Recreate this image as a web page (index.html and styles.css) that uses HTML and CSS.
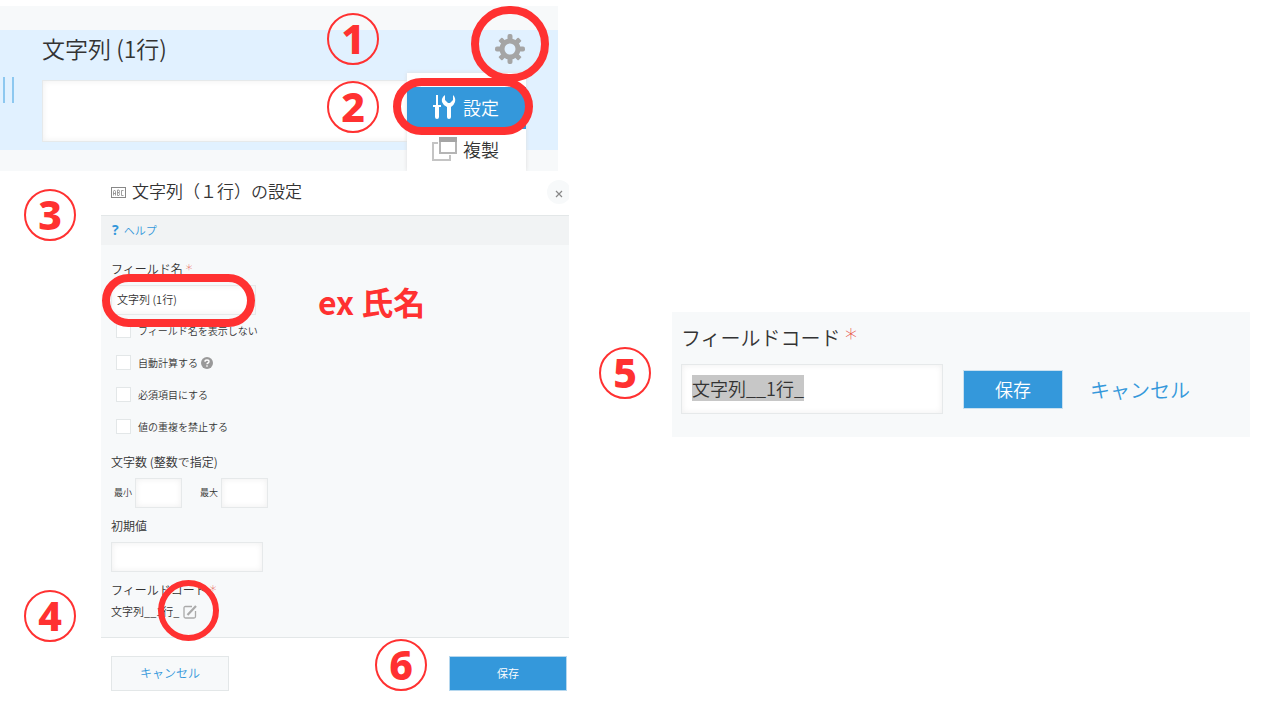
FILE: index.html
```html
<!DOCTYPE html>
<html lang="ja">
<head>
    <meta charset="UTF-8">
    <meta name="viewport" content="width=device-width, initial-scale=1.0">
    <title>文字列（１行）の設定</title>
    <link rel="stylesheet" href="styles.css">
</head>
<body>
    <main class="guide">
        <div class="guide-left">
            <section class="field-panel">
                <div class="field-row">
                    <span class="drag-handle"></span>
                    <div class="field-main">
                        <label class="field-label" for="preview">文字列 (1行)</label>
                        <input class="text-box field-input" type="text" id="preview">
                    </div>
                    <button class="gear-btn" type="button" aria-label="設定メニュー">
                        <svg width="30" height="30" viewBox="0 0 30 30">
                            <g fill="#a5a5a5">
                                <rect x="12.500" y="0" width="5" height="30" rx="2"/>
                                <rect x="12.500" y="1" width="5" height="28" rx="1" transform="rotate(45 15 15)"/>
                                <rect x="12.500" y="0" width="5" height="30" rx="2" transform="rotate(90 15 15)"/>
                                <rect x="12.500" y="1" width="5" height="28" rx="1" transform="rotate(135 15 15)"/>
                                <circle cx="15" cy="15" r="10.500"/>
                            </g>
                            <circle cx="15" cy="15" r="5.500" fill="#e1f1ff"/>
                        </svg>
                    </button>
                </div>
                <div class="menu">
                    <button class="menu-item menu-item-active" type="button">
                        <svg width="26" height="26" viewBox="0 0 26 26" fill="#fff">
                            <path d="M4 1h2v10h3v2H7v10q0 2-2 2t-2-2V13H1v-2h3z"/>
                            <path d="M13 1v5l3 3h2l3-3V1q3 3 2 7-1 3-4 5v10q0 2-2 2t-2-2V13q-4-2-5-5-1-4 3-7z"/>
                        </svg>
                        設定
                    </button>
                    <button class="menu-item" type="button">
                        <svg width="26" height="26" viewBox="0 0 26 26">
                            <path d="M6 7H1v17h17v-5" fill="none" stroke="#c4c4c4" stroke-width="2"/>
                            <rect x="8" y="2" width="16" height="15" fill="#fff" stroke="#b5b5b5" stroke-width="2"/>
                            <rect x="7" y="1" width="18" height="5" fill="#a5a5a5"/>
                        </svg>
                        複製
                    </button>
                </div>
            </section>

            <form class="settings">
                <header class="settings-header">
                    <svg width="15" height="11" viewBox="0 0 15 11" fill="none" stroke="#888">
                        <rect x=".5" y=".5" width="14" height="10"/>
                        <path d="M2.500 8.500v-4l1-1.500 1 1.500v4M2.500 6.500h2M6.500 3v5.500h1.500l.5-1-.5-1.500.5-1.500-.5-1.500H6.500M6.500 5.500H8M12.500 3.500h-2v5h2" stroke-width=".8"/>
                    </svg>
                    <h1 class="settings-title">文字列（１行）の設定</h1>
                    <button class="close-btn" type="button" aria-label="閉じる">
                        <svg width="8" height="8" viewBox="0 0 8 8" stroke="#888" stroke-width="1.200"><path d="M1 1l6 6M7 1L1 7"/></svg>
                    </button>
                </header>
                <div class="help-bar"><b class="help-mark">?</b><a class="link" href="#">ヘルプ</a></div>
                <div class="settings-body">
                    <label class="label" for="field-name">フィールド名 <span class="required">*</span></label>
                    <input class="text-box name-input" type="text" id="field-name" value="文字列 (1行)">
                    <div class="checks">
                        <label class="check"><input class="check-box" type="checkbox">フィールド名を表示しない</label>
                        <label class="check"><input class="check-box" type="checkbox">自動計算する
                            <svg class="hint" width="12" height="12" viewBox="0 0 12 12">
                                <circle cx="6" cy="6" r="6" fill="#999"/>
                                <path d="M4 4.700q0-1.700 2-1.700t2 1.500q0 1-1 1.500T6 7.300M6 8.300v1.400" fill="none" stroke="#fff" stroke-width="1.400"/>
                            </svg>
                        </label>
                        <label class="check"><input class="check-box" type="checkbox">必須項目にする</label>
                        <label class="check"><input class="check-box" type="checkbox">値の重複を禁止する</label>
                    </div>
                    <span class="label">文字数 (整数で指定)</span>
                    <div class="range">
                        <label class="range-label"><span class="range-text">最小</span><input class="text-box range-input" type="text"></label>
                        <label class="range-label"><span class="range-text">最大</span><input class="text-box range-input" type="text"></label>
                    </div>
                    <label class="label" for="default">初期値</label>
                    <input class="text-box default-input" type="text" id="default">
                    <span class="label code-label">フィールドコード <span class="required">*</span></span>
                    <div class="code">
                        <span class="code-text">文字列__1行_</span>
                        <button class="edit-btn" type="button" aria-label="編集">
                            <svg width="14" height="14" viewBox="0 0 14 14" fill="none" stroke="#aaa">
                                <path d="M9 1.500H2.500q-1.500 0-1.500 1.500v8.500Q1 13 2.500 13h8.500q1.500 0 1.500-1.500V6" stroke-width="1.300"/>
                                <path d="M4.500 10L13 1" stroke-width="2.200"/>
                            </svg>
                        </button>
                    </div>
                </div>
                <footer class="settings-footer">
                    <button class="btn cancel-btn" type="button">キャンセル</button>
                    <button class="btn save-btn" type="submit">保存</button>
                </footer>
            </form>

            <span class="ring ring-gear"></span>
            <span class="ring ring-menu"></span>
            <span class="ring ring-name"></span>
            <span class="ring ring-code"></span>
            <span class="step step-1">1</span>
            <span class="step step-2">2</span>
            <span class="step step-3">3</span>
            <span class="step step-4">4</span>
            <span class="step step-6">6</span>
            <span class="example">ex 氏名</span>
        </div>

        <div class="guide-right">
            <span class="step">5</span>
            <form class="code-panel">
                <label class="code-panel-label" for="field-code">フィールドコード <span class="required">*</span></label>
                <div class="code-panel-row">
                    <input class="text-box code-input" type="text" id="field-code" value="文字列__1行_">
                    <button class="btn code-save" type="submit">保存</button>
                    <a class="link code-cancel" href="#">キャンセル</a>
                </div>
            </form>
        </div>
    </main>

    <script>
        const fieldCode = document.getElementById('field-code');
        fieldCode.focus();
        fieldCode.select();
    </script>
</body>
</html>
```
FILE: styles.css
```css
* {
    box-sizing: border-box;
}
body {
    margin: 0;
    background: #fff;
    color: #333;
    font-family: "Noto Sans CJK JP", sans-serif;
    font-size: 12px;
    font-weight: 350;
}
button, input {
    font-family: inherit;
    font-weight: inherit;
    color: inherit;
}
button {
    padding: 0;
    border: none;
    background: none;
    cursor: pointer;
}
svg {
    flex: none;
}
.guide {
    display: grid;
    grid-template-columns: 569fr 711fr;
}
.guide-left {
    position: relative;
    padding-top: 6px;
}
.text-box {
    display: block;
    border: 1px solid #e6e9ea;
    background: #fff;
    box-shadow: inset 0 0 6px #eee;
    outline: none;
}
.link {
    color: #3498db;
    text-decoration: none;
}
.required {
    color: #e74c3c;
    font-family: "DejaVu Sans", sans-serif;
    font-size: 14px;
    line-height: 1;
}

/* フィールドのプレビュー */
.field-panel {
    position: relative;
    margin-right: 11px;
    padding: 24px 0 21px;
    background: #f7f9fa;
    overflow: hidden;
}
.field-row {
    display: flex;
    height: 120px;
    background: #e1f1ff;
}
.drag-handle {
    align-self: center;
    width: 11px;
    height: 26px;
    margin-left: 3px;
    border: solid #8dc8f0;
    border-width: 0 2px;
}
.field-main {
    flex: 1;
    padding: 4px 0 0 28px;
}
.field-label {
    display: block;
    height: 46px;
    font-size: 23px;
    line-height: 28px;
}
.field-input {
    width: 100%;
    height: 62px;
}
.gear-btn {
    align-self: flex-start;
    height: 30px;
    margin: 4px 33px 0 0;
}
.menu {
    position: absolute;
    top: 67px;
    right: 32px;
    width: 119px;
    padding-top: 14px;
    background: #fff;
    box-shadow: 0 0 4px #ddd;
}
.menu-item {
    display: flex;
    align-items: center;
    gap: 5px;
    width: 100%;
    height: 42px;
    padding: 0 0 2px 25px;
    font-size: 18px;
}
.menu-item-active {
    background: #3498db;
    color: #fff;
}

/* 設定ダイアログ */
.settings {
    margin-left: 101px;
}
.settings-header {
    display: flex;
    align-items: center;
    height: 45px;
    padding: 0 0 2px 10px;
    border-bottom: 1px solid #e3e7e8;
    overflow: hidden;
}
.settings-title {
    flex: 1;
    margin: 0 0 4px 6px;
    font-size: 17px;
    font-weight: inherit;
}
.close-btn {
    flex: none;
    width: 24px;
    height: 24px;
    margin-right: -2px;
    border-radius: 50%;
    background: #f7f9fa;
}
.help-bar {
    display: flex;
    align-items: center;
    gap: 5px;
    height: 29px;
    padding: 0 0 2px 11px;
    background: #f1f3f4;
    font-size: 11px;
}
.help-mark {
    color: #3498db;
    font-family: "Open Sans", sans-serif;
    font-size: 14px;
}
.settings-body {
    padding: 14px 10px 15px;
    border-bottom: 1px solid #e3e7e8;
    background: #f7f9fa;
}
.label {
    display: block;
    height: 20px;
    margin-bottom: 6px;
    line-height: 20px;
}
.name-input {
    width: 145px;
    height: 30px;
    padding: 0 5px 2px;
    font-size: 11px;
}
.checks {
    display: grid;
    gap: 16px;
    margin: 8px 0 17px 5px;
}
.check {
    display: flex;
    align-items: center;
    height: 16px;
    font-size: 10px;
    line-height: 14px;
    padding-bottom: 1px;
}
.check-box {
    appearance: none;
    width: 15px;
    height: 15px;
    margin: 0 7px 0 0;
    border: 1px solid #e3e7e8;
    background: #fff;
}
.hint {
    margin-left: 3px;
}
.range {
    display: flex;
    gap: 18px;
    margin: 0 0 8px 3px;
}
.range-label {
    display: flex;
    align-items: center;
    gap: 3px;
    font-size: 9px;
}
.range-text {
    padding-bottom: 2px;
}
.range-input {
    width: 47px;
    height: 30px;
}
.default-input {
    width: 152px;
    height: 30px;
    margin-bottom: 8px;
}
.code-label {
    margin-bottom: 2px;
}
.code {
    display: flex;
    align-items: center;
    gap: 4px;
    height: 20px;
    font-size: 11px;
}
.code-text {
    padding-bottom: 2px;
}
.edit-btn {
    height: 14px;
}
.edit-btn svg {
    display: block;
}
.settings-footer {
    display: flex;
    justify-content: space-between;
    padding: 18px 2px 18px 10px;
}
.btn {
    background: #3498db;
    color: #fff;
}
.cancel-btn {
    width: 118px;
    height: 35px;
    padding-bottom: 2px;
    border: 1px solid #e3e7e8;
    background: #f7f9fa;
    color: #3498db;
    font-size: 12px;
}
.save-btn {
    width: 118px;
    height: 35px;
    padding-bottom: 2px;
    border: 1px solid #b5d7ee;
    font-size: 11px;
}

/* フィールドコードの編集 */
.guide-right {
    display: flex;
    align-items: flex-start;
    gap: 21px;
    padding: 312px 30px 0;
}
.guide-right .step {
    flex: none;
    margin-top: 35px;
}
.code-panel {
    flex: 1;
    padding: 10px 9px 23px;
    background: #f7f9fa;
}
.code-panel-label {
    display: block;
    height: 32px;
    margin-bottom: 10px;
    font-size: 20px;
    line-height: 32px;
}
.code-panel-label .required {
    font-size: 24px;
}
.code-panel-row {
    display: flex;
    align-items: center;
}
.code-input {
    width: 262px;
    height: 50px;
    padding: 0 10px 2px;
    font-size: 18px;
}
.code-input::selection {
    background: rgba(198, 198, 198, 0.99);
    color: #333;
}
.code-save {
    width: 100px;
    height: 39px;
    margin: 0 27px 0 20px;
    border: 1px solid #c9e0f0;
    font-size: 18px;
}
.code-cancel {
    font-size: 20px;
}

/* 手順の番号と囲み */
.step {
    width: 52px;
    height: 52px;
    border: 2px solid #ff3131;
    border-radius: 50%;
    color: #ff3131;
    font-family: "Noto Sans", sans-serif;
    font-size: 41px;
    font-weight: 800;
    line-height: 46px;
    text-align: center;
}
.guide-left .step, .ring, .example {
    position: absolute;
}
.step-1 {
    top: 13px;
    left: 327px;
}
.step-2 {
    top: 81px;
    left: 327px;
}
.step-3 {
    top: 189px;
    left: 24px;
}
.step-4 {
    top: 590px;
    left: 24px;
}
.step-6 {
    top: 639px;
    left: 375px;
}
.ring {
    border: 8px solid #ff3131;
    border-radius: 40px;
    pointer-events: none;
}
.ring-gear {
    top: 6px;
    right: 20px;
    width: 78px;
    height: 76px;
}
.ring-menu {
    top: 78px;
    right: 36px;
    width: 140px;
    height: 57px;
}
.ring-name {
    top: 274px;
    left: 102px;
    width: 153px;
    height: 53px;
}
.ring-code {
    top: 580px;
    left: 158px;
    width: 61px;
    height: 61px;
    border-width: 6px;
}
.example {
    top: 278px;
    left: 318px;
    color: #ff3131;
    font-size: 32px;
    font-weight: 700;
    line-height: 46px;
}
```
